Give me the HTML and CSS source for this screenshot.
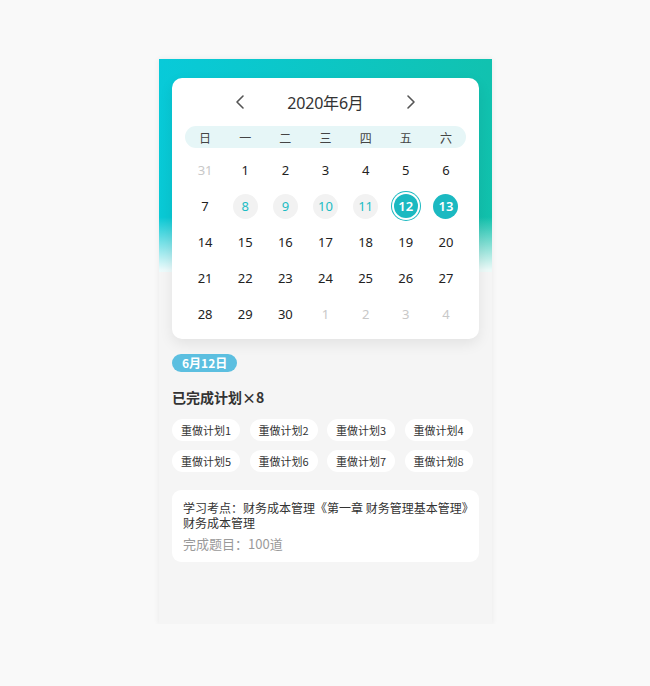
FILE: index.html
```html
<!DOCTYPE html>
<html lang="zh">
<head>
<meta charset="utf-8">
<title>学习日历</title>
<link rel="stylesheet" href="styles.css">
</head>
<body>
<div class="phone">
  <div class="cal-card">
    <div class="cal-head">
      <svg class="chev" width="10" height="16" viewBox="0 0 10 16"><path d="M8 2 L2 8 L8 14" fill="none" stroke="#555" stroke-width="1.6" stroke-linecap="round" stroke-linejoin="round"/></svg>
      <span class="month">2020年6月</span>
      <svg class="chev" width="10" height="16" viewBox="0 0 10 16"><path d="M2 2 L8 8 L2 14" fill="none" stroke="#555" stroke-width="1.6" stroke-linecap="round" stroke-linejoin="round"/></svg>
    </div>
    <div class="week">
      <span>日</span><span>一</span><span>二</span><span>三</span><span>四</span><span>五</span><span>六</span>
    </div>
    <div class="days">
      <span class="d out">31</span><span class="d">1</span><span class="d">2</span><span class="d">3</span><span class="d">4</span><span class="d">5</span><span class="d">6</span>
      <span class="d">7</span><span class="d"><i class="done">8</i></span><span class="d"><i class="done">9</i></span><span class="d"><i class="done">10</i></span><span class="d"><i class="done">11</i></span><span class="d"><i class="sel">12</i></span><span class="d"><i class="fill">13</i></span>
      <span class="d">14</span><span class="d">15</span><span class="d">16</span><span class="d">17</span><span class="d">18</span><span class="d">19</span><span class="d">20</span>
      <span class="d">21</span><span class="d">22</span><span class="d">23</span><span class="d">24</span><span class="d">25</span><span class="d">26</span><span class="d">27</span>
      <span class="d">28</span><span class="d">29</span><span class="d">30</span><span class="d out">1</span><span class="d out">2</span><span class="d out">3</span><span class="d out">4</span>
    </div>
  </div>

  <div class="detail">
    <span class="badge">6月12日</span>
    <h2 class="done-title">已完成计划×8</h2>
    <div class="tags">
      <span class="tag">重做计划1</span><span class="tag">重做计划2</span><span class="tag">重做计划3</span><span class="tag">重做计划4</span>
      <span class="tag">重做计划5</span><span class="tag">重做计划6</span><span class="tag">重做计划7</span><span class="tag">重做计划8</span>
    </div>
    <div class="info">
      <p class="point">学习考点：财务成本管理《第一章 财务管理基本管理》财务成本管理</p>
      <p class="count">完成题目：100道</p>
    </div>
  </div>
</div>
</body>
</html>
```
FILE: styles.css
```css
* { box-sizing: border-box; }
html, body { margin: 0; padding: 0; }
body {
  background: #f9f9f9;
  font-family: "Noto Sans", "Noto Sans CJK SC", sans-serif;
  color: #333;
}
.phone {
  width: 333px;
  height: 565px;
  margin: 59px 0 0 159px;
  padding-top: 19px;
  background:
    linear-gradient(to bottom, rgba(255,255,255,0) 0, rgba(255,255,255,0) 158px, rgba(255,255,255,0.92) 211px, rgba(255,255,255,0.92) 213px) no-repeat 0 0 / 100% 213px,
    linear-gradient(100deg, #08cad9 0%, #12c1ab 100%) no-repeat 0 0 / 100% 213px,
    #f5f5f5;
  box-shadow: 0 0 6px rgba(0,0,0,0.07);
}
.cal-card {
  margin: 0 13px;
  height: 261px;
  background: #fff;
  border-radius: 10px;
  box-shadow: 0 5px 14px rgba(0,0,0,0.08);
  padding: 0 13px 7px;
}
.cal-head {
  height: 48px;
  display: flex;
  align-items: center;
  justify-content: center;
  gap: 42px;
}
.month { font-size: 16px; color: #333; letter-spacing: -0.2px; }
.week {
  height: 22px;
  border-radius: 11px;
  background: #e6f6f7;
  display: grid;
  grid-template-columns: repeat(7, 1fr);
  align-items: center;
  font-size: 12px;
  color: #444;
  text-align: center;
  font-family: "Noto Sans CJK SC", sans-serif;
}
.days {
  margin-top: 4px;
  display: grid;
  grid-template-columns: repeat(7, 1fr);
  grid-auto-rows: 36px;
}
.d {
  display: flex;
  align-items: center;
  justify-content: center;
  font-size: 13px;
  color: #222;
}
.d.out { color: #c8c8c8; }
.d i {
  font-style: normal;
  width: 25px;
  height: 25px;
  border-radius: 50%;
  display: flex;
  align-items: center;
  justify-content: center;
}
.d .done { background: #f2f2f2; color: #1cbcc4; }
.d .fill { background: #1bb9c1; color: #fff; font-weight: 600; }
.d .sel {
  background: #1bb9c1;
  color: #fff;
  font-weight: 600;
  width: 24px;
  height: 24px;
  box-shadow: 0 0 0 2px #fff, 0 0 0 3px #1bb9c1;
}
.detail { padding: 15px 13px 0; }
.badge {
  display: block;
  width: max-content;
  height: 18px;
  line-height: 18px;
  padding: 0 10px;
  border-radius: 9px;
  background: #5cbfe0;
  color: #fff;
  font-size: 12px;
  font-weight: 700;
  font-family: "Noto Sans CJK SC", sans-serif;
}
.done-title {
  margin: 16px 0 13px;
  font-size: 14px;
  line-height: 18px;
  font-weight: 700;
  color: #333;
  font-family: "Noto Sans CJK SC", sans-serif;
}
.tags {
  display: grid;
  grid-template-columns: repeat(4, 68px);
  column-gap: 9.5px;
  row-gap: 9px;
}
.tag {
  height: 22px;
  line-height: 22px;
  border-radius: 11px;
  background: #fff;
  text-align: center;
  font-size: 11px;
  color: #333;
  font-family: "Noto Sans CJK SC", sans-serif;
}
.info {
  margin-top: 18px;
  background: #fff;
  border-radius: 9px;
  padding: 10px 11px 9px;
  font-family: "Noto Sans CJK SC", sans-serif;
}
.info p { margin: 0; }
.point { font-size: 12px; line-height: 15px; color: #333; }
.count { margin-top: 5px !important; font-size: 13px; line-height: 18px; color: #9a9a9a; }
```
